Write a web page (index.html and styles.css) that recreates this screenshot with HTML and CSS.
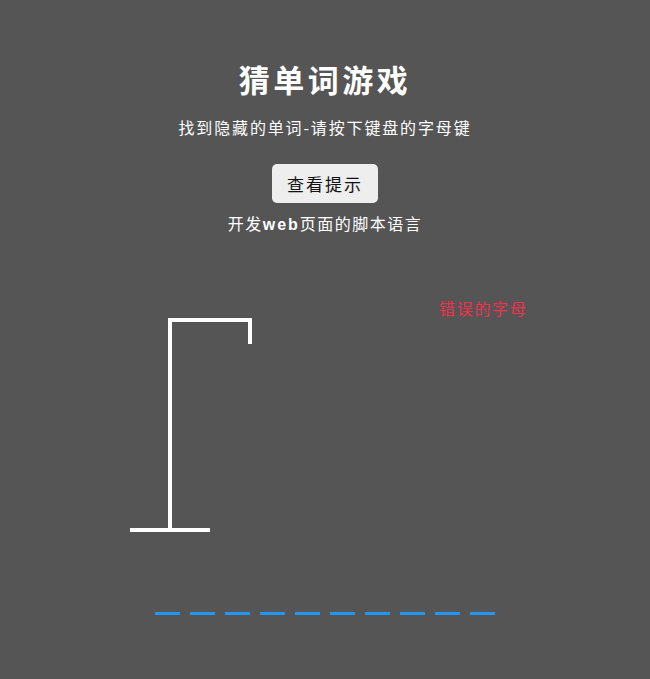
FILE: index.html
```html
<!DOCTYPE html>
<html lang="zh-CN">
<head>
<meta charset="utf-8">
<title>猜单词游戏</title>
<link rel="stylesheet" href="styles.css">
</head>
<body>
<main class="page">
  <h1 class="title">猜单词游戏</h1>
  <p class="subtitle">找到隐藏的单词-请按下键盘的字母键</p>
  <button class="hint-btn" type="button">查看提示</button>
  <p class="hint-text">开发<b>web</b>页面的脚本语言</p>
  <div class="game-container">
    <svg class="figure" width="300" height="250" viewBox="0 0 300 250">
      <line x1="60" y1="20" x2="142" y2="20"></line>
      <line x1="140" y1="18" x2="140" y2="44"></line>
      <line x1="60" y1="18" x2="60" y2="230"></line>
      <line x1="20" y1="230" x2="100" y2="230"></line>
    </svg>
    <div class="wrong-letters">错误的字母</div>
  </div>
  <div class="word">
    <span class="letter"></span><span class="letter"></span><span class="letter"></span><span class="letter"></span><span class="letter"></span><span class="letter"></span><span class="letter"></span><span class="letter"></span><span class="letter"></span><span class="letter"></span>
  </div>
</main>
</body>
</html>
```

FILE: styles.css
```css
* { box-sizing: border-box; }
html, body {
  margin: 0;
  padding: 0;
  background: #555555;
  height: 100%;
}
body {
  color: #ffffff;
  font-family: "Noto Sans CJK SC", "Noto Sans", sans-serif;
  overflow: hidden;
}
.page {
  display: flex;
  flex-direction: column;
  align-items: center;
}
.title {
  margin: 59px 0 0;
  font-size: 31px;
  line-height: 40px;
  font-weight: 700;
  letter-spacing: 3.5px;
  font-family: "Noto Sans CJK SC", serif;
}
.subtitle {
  margin: 16px 0 0;
  font-size: 16px;
  line-height: 24px;
  letter-spacing: 1.85px;
}
.hint-btn {
  margin-top: 25px;
  width: 106px;
  height: 39px;
  border: none;
  border-radius: 5px;
  background: #eeeeee;
  color: #111;
  font-family: "Noto Sans CJK SC", sans-serif;
  font-size: 17px;
  letter-spacing: 2px;
  padding: 0;
}
.hint-text {
  margin: 8px 0 0;
  font-size: 16px;
  line-height: 24px;
  letter-spacing: 1.5px;
}
.hint-text b {
  font-family: "Liberation Sans", sans-serif;
  font-weight: 700;
  letter-spacing: 2px;
}
.game-container {
  position: relative;
  width: 650px;
  height: 250px;
  margin-top: 63px;
}
.figure {
  display: block;
  margin-left: 110px;
  fill: transparent;
  stroke: #ffffff;
  stroke-width: 4px;
  stroke-linecap: butt;
}
.wrong-letters {
  position: absolute;
  top: -1px;
  left: 439px;
  color: #f0304f;
  font-size: 16px;
  line-height: 18px;
  letter-spacing: 1.7px;
}
.word {
  display: flex;
  gap: 10px;
  margin-top: 15px;
}
.letter {
  display: block;
  width: 25px;
  height: 50px;
  border-bottom: 3px solid #2196f3;
}
```
